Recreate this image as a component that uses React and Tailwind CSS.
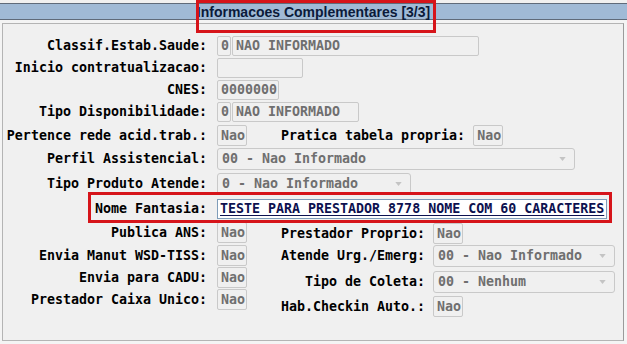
import React from 'react';

const Arrow = () => (
  <svg width="7" height="4" viewBox="0 0 8 5" className="shrink-0 mr-[8px]">
    <path d="M0 0 L8 0 L4 5 Z" fill="#c4c4c4" />
  </svg>
);

// read-only grey field
const Box = ({ w, h = 'h-[20px]', children }) => (
  <div className={`${w} ${h} shrink-0 border border-[#c9c9c9] rounded-[2px] bg-[#f0f0f0] pl-[3px] flex items-center text-[#6f6f6f] font-bold overflow-hidden whitespace-nowrap`}>
    {children}
  </div>
);

const Select = ({ w, children }) => (
  <div className={`${w} h-[22px] shrink-0 border border-[#c9c9c9] rounded-[3px] bg-[#f0f0f0] pl-[4px] flex items-center justify-between text-[#6f6f6f] font-bold whitespace-nowrap`}>
    <span>{children}</span>
    <Arrow />
  </div>
);

const Label = ({ w = 'w-[204px]', children }) => (
  <span className={`${w} shrink-0 text-right font-bold text-black whitespace-nowrap`}>{children}</span>
);

const App = () => {
  return (
    <div className="relative w-[627px] h-[344px] bg-[#f4f4f4] overflow-hidden font-['DejaVu_Sans_Mono','Liberation_Mono',monospace] text-[13.3px] leading-none">
      {/* header bar */}
      <div className="h-[3px] bg-[#f0f0f0]" />
      <div className="h-[17px] border-y border-[#5f6b7a] bg-[#a0bad6] flex items-center justify-center">
        <span className="font-['Liberation_Sans',Arial,sans-serif] font-bold text-[14px] text-[#0b1a3a]">
          Informacoes Complementares [3/3]
        </span>
      </div>
      <div className="h-[3px]" />

      {/* panel */}
      <div className="ml-[2px] w-[622px] h-[318px] border border-[#b4b4b4] border-r-[#9a9a9a] bg-[#f0f0f0]">
        <div className="flex items-center h-[20px] mt-[12px]">
          <Label>Classif.Estab.Saude:</Label>
          <div className="ml-[10px] flex gap-px">
            <Box w="w-[14px]">0</Box>
            <Box w="w-[247px]">NAO INFORMADO</Box>
          </div>
        </div>

        <div className="flex items-center h-[20px] mt-[2px]">
          <Label>Inicio contratualizacao:</Label>
          <div className="ml-[10px]"><Box w="w-[86px]" /></div>
        </div>

        <div className="flex items-center h-[20px] mt-[2px]">
          <Label>CNES:</Label>
          <div className="ml-[10px]"><Box w="w-[62px]">0000000</Box></div>
        </div>

        <div className="flex items-center h-[20px] mt-[2px]">
          <Label>Tipo Disponibilidade:</Label>
          <div className="ml-[10px] flex gap-px">
            <Box w="w-[14px]">0</Box>
            <Box w="w-[127px]">NAO INFORMADO</Box>
          </div>
        </div>

        <div className="flex items-center h-[21px] mt-[3px]">
          <Label>Pertence rede acid.trab.:</Label>
          <div className="ml-[10px]"><Box w="w-[30px]" h="h-[21px]">Nao</Box></div>
          <span className="ml-[34px]"><Label w="w-[184px]">Pratica tabela propria:</Label></span>
          <div className="ml-[8px]"><Box w="w-[30px]" h="h-[21px]">Nao</Box></div>
        </div>

        <div className="flex items-center h-[22px] mt-[2px]">
          <Label>Perfil Assistencial:</Label>
          <div className="ml-[10px]"><Select w="w-[358px]">00 - Nao Informado</Select></div>
        </div>

        <div className="flex items-center h-[22px] mt-[3px]">
          <Label>Tipo Produto Atende:</Label>
          <div className="ml-[10px]"><Select w="w-[194px]">0 - Nao Informado</Select></div>
        </div>

        <div className="flex items-center h-[20px] mt-[4px]">
          <Label>Nome Fantasia:</Label>
          <div className="ml-[10px] w-[390px] h-[20px] border border-[#7f9db9] bg-white pl-[2px] flex items-center">
            <span className="font-bold text-[#0d1150] underline underline-offset-[2px] whitespace-nowrap">
              TESTE PARA PRESTADOR 8778 NOME COM 60 CARACTERES
            </span>
          </div>
        </div>

        <div className="flex mt-[3px]">
          <div className="w-[278px] shrink-0 flex flex-col">
            <div className="flex items-center h-[21px]">
              <Label>Publica ANS:</Label>
              <div className="ml-[10px]"><Box w="w-[30px]" h="h-[21px]">Nao</Box></div>
            </div>
            <div className="flex items-center h-[21px] mt-[2px]">
              <Label>Envia Manut WSD-TISS:</Label>
              <div className="ml-[10px]"><Box w="w-[30px]" h="h-[21px]">Nao</Box></div>
            </div>
            <div className="flex items-center h-[21px] mt-[1px]">
              <Label>Envia para CADU:</Label>
              <div className="ml-[10px]"><Box w="w-[30px]" h="h-[21px]">Nao</Box></div>
            </div>
            <div className="flex items-center h-[21px] mt-[1px]">
              <Label>Prestador Caixa Unico:</Label>
              <div className="ml-[10px]"><Box w="w-[30px]" h="h-[21px]">Nao</Box></div>
            </div>
          </div>

          <div className="flex flex-col">
            <div className="flex items-center h-[21px] mt-[1px]">
              <Label w="w-[144px]">Prestador Proprio:</Label>
              <div className="ml-[8px]"><Box w="w-[30px]" h="h-[21px]">Nao</Box></div>
            </div>
            <div className="flex items-center h-[22px] mt-[1px]">
              <Label w="w-[144px]">Atende Urg./Emerg:</Label>
              <div className="ml-[8px]"><Select w="w-[182px]">00 - Nao Informado</Select></div>
            </div>
            <div className="flex items-center h-[22px] mt-[4px]">
              <Label w="w-[144px]">Tipo de Coleta:</Label>
              <div className="ml-[8px]"><Select w="w-[182px]">00 - Nenhum</Select></div>
            </div>
            <div className="flex items-center h-[21px] mt-[3px]">
              <Label w="w-[144px]">Hab.Checkin Auto.:</Label>
              <div className="ml-[8px]"><Box w="w-[30px]" h="h-[21px]">Nao</Box></div>
            </div>
          </div>
        </div>
      </div>

      {/* highlight marks */}
      <div className="absolute left-[196px] top-0 w-[240px] h-[33px] border-[3px] border-[#d6141a] pointer-events-none" />
      <div className="absolute left-[88px] top-[192px] w-[524px] h-[31px] border-[3px] border-[#d6141a] pointer-events-none" />
    </div>
  );
};

export default App;
